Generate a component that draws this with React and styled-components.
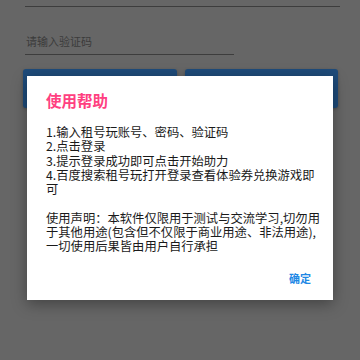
import React from "react";
import styled, { createGlobalStyle } from "styled-components";

const GlobalStyle = createGlobalStyle`
  html, body {
    margin: 0;
    padding: 0;
    background: #666666;
  }
  body {
    font-family: "Noto Sans CJK SC", Roboto, sans-serif;
  }
`;

const Screen = styled.div`
  position: relative;
  width: 360px;
  height: 360px;
  overflow: hidden;
  background: #666666;
`;

const Form = styled.div`
  padding: 0 23px;
  display: flex;
  flex-direction: column;
`;

const TopField = styled.div`
  height: 6px;
  margin: 0 -3px 0 2px;
  border-bottom: 1.5px solid #3d3d3d;
`;

const CodeField = styled.div`
  width: 208px;
  margin: 26px 0 0 2px;
  padding: 0 0 5px 1px;
  border-bottom: 1.5px solid #3d3d3d;
  font-size: 11px;
  line-height: 16px;
  color: #3b3b3b;
`;

const ButtonRow = styled.div`
  display: flex;
  gap: 8px;
  margin: 14px -1px 0 0;
`;

const FormButton = styled.div`
  flex: 1;
  height: 39px;
  border-radius: 3px;
  background: #1e4b7a;
  box-shadow: 0 1px 3px rgba(0, 0, 0, 0.25);
`;

const Dialog = styled.div`
  position: absolute;
  top: 76px;
  left: 27px;
  width: 306px;
  background: #ffffff;
  box-shadow: 0 4px 14px rgba(0, 0, 0, 0.35);
  padding: 14px 12px 11px 19px;
  box-sizing: border-box;
  display: flex;
  flex-direction: column;
`;

const Title = styled.div`
  font-size: 15.5px;
  line-height: 20px;
  font-weight: bold;
  color: #ff4081;
`;

const Body = styled.div`
  margin-top: 15px;
  font-size: 12.3px;
  line-height: 14.25px;
  color: #1a1a1a;
  white-space: pre;
`;

const Actions = styled.div`
  display: flex;
  justify-content: flex-end;
  margin-top: 14px;
  padding-right: 10px;
`;

const ActionButton = styled.div`
  font-size: 11px;
  line-height: 22px;
  font-weight: bold;
  color: #1e88e5;
`;

const helpLines = [
  "1.输入租号玩账号、密码、验证码",
  "2.点击登录",
  "3.提示登录成功即可点击开始助力",
  "4.百度搜索租号玩打开登录查看体验券兑换游戏即",
  "可",
  "",
  "使用声明：本软件仅限用于测试与交流学习,切勿用",
  "于其他用途(包含但不仅限于商业用途、非法用途),",
  "一切使用后果皆由用户自行承担"
];

const App = () => {
  return (
    <>
      <GlobalStyle />
      <Screen>
        <Form>
          <TopField />
          <CodeField>请输入验证码</CodeField>
          <ButtonRow>
            <FormButton />
            <FormButton />
          </ButtonRow>
        </Form>
        <Dialog>
          <Title>使用帮助</Title>
          <Body>{helpLines.join("\n")}</Body>
          <Actions>
            <ActionButton>确定</ActionButton>
          </Actions>
        </Dialog>
      </Screen>
    </>
  );
};

export default App;
